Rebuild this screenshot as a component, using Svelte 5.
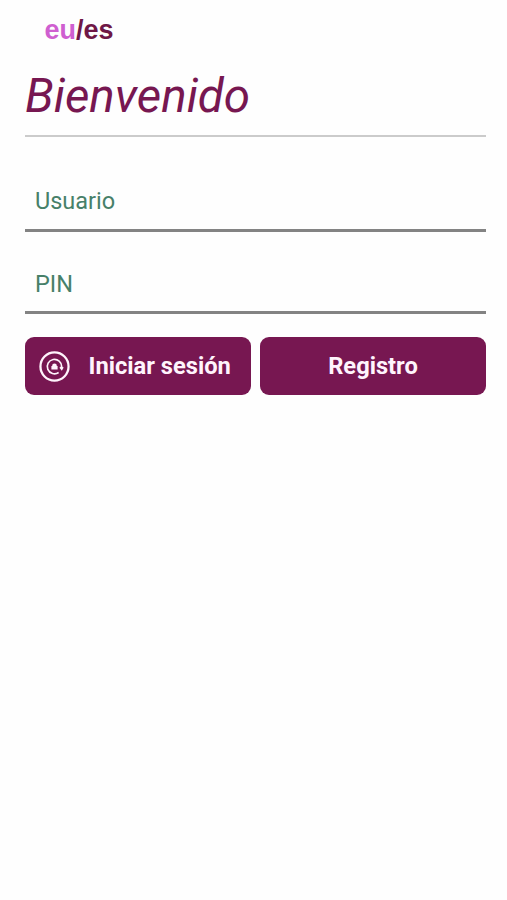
<script>
    let user = '';
    let pin = '';
    let lang = 'es';

    const changeLanguage = (value) => {
        lang = value;
    };
</script>

<main class="wrapper">
    <div class="languages">
        <button type="button" class:active={lang === 'eu'} on:click={() => changeLanguage('eu')}>eu</button><span>/</span><button type="button" class:active={lang === 'es'} on:click={() => changeLanguage('es')}>es</button>
    </div>

    <h1>Bienvenido</h1>
    <hr>

    <form on:submit|preventDefault>
        <input type="text" placeholder="Usuario" aria-label="Usuario" bind:value={user}>
        <input type="password" placeholder="PIN" aria-label="PIN" bind:value={pin}>

        <div class="actions">
            <button class="action login" type="submit">
                <svg viewBox="0 0 30 30" fill="none" stroke="currentColor">
                    <circle cx="15" cy="15" r="13.6" stroke-width="2.2" />
                    <path d="M19 20.8A7 7 0 1 1 22 15.2v1.6M20.4 15.6l1.6 2 1.2-2" stroke-width="1.6" />
                    <path d="M12 17.8v-3.4h.7a2.3 2.3 0 0 1 4.6 0h.7v3.4z" fill="currentColor" stroke="none" />
                </svg>
                <span>Iniciar sesión</span>
            </button>
            <button class="action" type="button">Registro</button>
        </div>
    </form>
</main>

<style>
    :global(body) {
        background: #fefefe;
    }

    .wrapper {
        box-sizing: border-box;
        width: 100%;
        min-height: 900px;
        padding: 15px 21px 0 25px;
        font-family: Roboto, sans-serif;
        color: #771751;
    }

    .languages {
        display: flex;
        padding-left: 19.5px;
        font: bold 27px/31px "Liberation Sans", Arial, sans-serif;
        color: #6f1746;
    }

    .languages button {
        padding: 0;
        border: 0;
        background: none;
        font: inherit;
        color: #cf5fd0;
        cursor: pointer;
    }

    .languages button.active {
        color: #6f1746;
    }

    h1 {
        margin: 22px 0 0;
        font-size: 47.5px;
        font-style: italic;
        font-weight: 400;
        line-height: 56px;
    }

    hr {
        height: 2px;
        margin: 11px 0 0;
        border: 0;
        background: #cbcbcb;
    }

    form {
        padding-top: 35px;
    }

    input {
        display: block;
        box-sizing: border-box;
        width: 100%;
        height: 60px;
        margin: 0 0 22px;
        padding: 1px 10px 0;
        border: 0;
        border-bottom: 3px solid #838383;
        border-radius: 0;
        outline: none;
        background: none;
        font: 23.5px Roboto, sans-serif;
        color: #3d7c65;
    }

    input[type="password"] {
        padding-top: 2px;
    }

    input::placeholder {
        color: #478069;
        opacity: 1;
    }

    .actions {
        display: grid;
        grid-template-columns: 1fr 1fr;
        gap: 9px;
        padding-top: 1px;
    }

    .action {
        display: flex;
        align-items: center;
        justify-content: center;
        height: 58px;
        padding: 0;
        border: 0;
        border-radius: 9px;
        background: #771751;
        font: bold 23.7px Roboto, sans-serif;
        color: #fff4fc;
        cursor: pointer;
    }

    .login {
        justify-content: flex-start;
        padding-left: 14px;
    }

    .login svg {
        width: 31px;
        height: 31px;
        margin-right: 18.5px;
    }
</style>
